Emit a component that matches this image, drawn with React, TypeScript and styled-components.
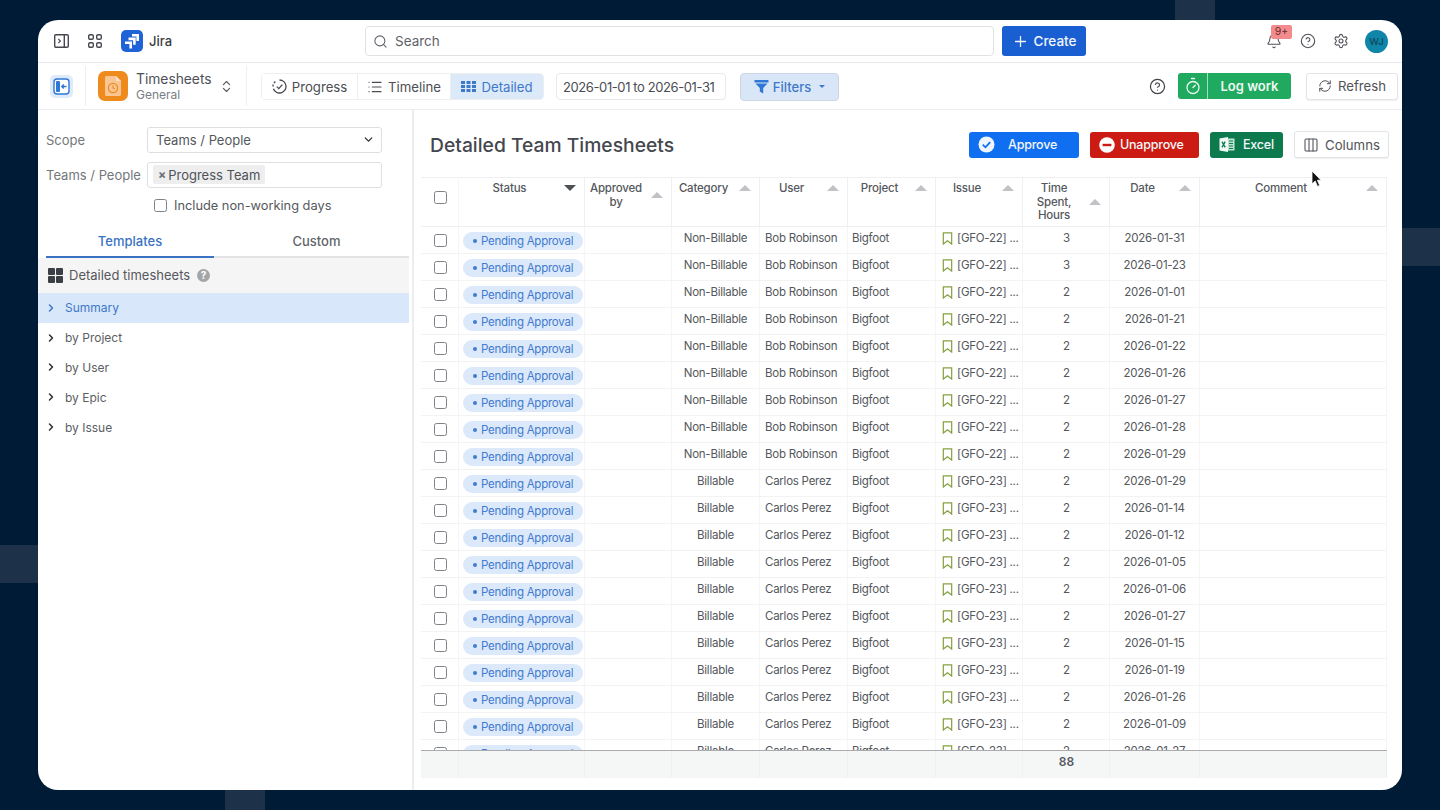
import { createGlobalStyle, styled } from "styled-components"
import {
  Bell,
  ChevronDown,
  ChevronRight,
  ChevronsUpDown,
  CircleHelp,
  Columns3,
  List,
  Plus,
  RefreshCw,
  Search,
  Settings,
  Timer,
} from "lucide-react"

const tile = (x: number, y: number, w: number, h: number, c = "#1d3249") =>
  `linear-gradient(${c}, ${c}) ${x}px ${y}px / ${w}px ${h}px no-repeat`

const GlobalStyle = createGlobalStyle`
  html, body {
    margin: 0;
    height: 100%;
    overflow: hidden;
  }
  body {
    font-family: Inter, "Liberation Sans", sans-serif;
    color: #44474d;
    background:
      ${tile(0, 545, 38, 38)},
      ${tile(1175, 0, 40, 20)},
      ${tile(225, 790, 40, 20)},
      ${tile(1402, 228, 38, 38)},
      #001b35;
  }
  * {
    box-sizing: border-box;
  }
`

const Page = styled.div`
  width: 1440px;
  height: 810px;
  padding: 20px 38px;
`

const Win = styled.div`
  width: 1364px;
  height: 770px;
  background: #fff;
  border-radius: 20px;
  overflow: hidden;
  display: flex;
  flex-direction: column;
`

const TopBar = styled.div`
  height: 43px;
  flex: none;
  display: flex;
  align-items: center;
  border-bottom: 1px solid #e6e7e9;
  padding: 0 14px 0 16px;
`

const TopIcon = styled.span<{ $w?: number }>`
  width: ${(p) => p.$w ?? 34}px;
  flex: none;
  display: flex;
  align-items: center;
`

const JiraName = styled.span`
  font-size: 13px;
  font-weight: 500;
  color: #3a3d42;
  margin-left: 6px;
  width: 216px;
`

const SearchBox = styled.div`
  width: 629px;
  height: 30px;
  flex: none;
  border: 1px solid #dfe1e4;
  border-radius: 4px;
  display: flex;
  align-items: center;
  gap: 7px;
  padding: 0 7px;
  font-size: 13.5px;
  color: #5e6168;
`

const CreateBtn = styled.div`
  width: 84px;
  height: 30px;
  flex: none;
  margin-left: 8px;
  background: #1a5fd2;
  border-radius: 3px;
  color: #f2f6fd;
  font-size: 13.5px;
  font-weight: 500;
  display: flex;
  align-items: center;
  justify-content: center;
  gap: 5px;
`

const TopRight = styled.div`
  margin-left: auto;
  display: flex;
  align-items: center;
  gap: 17px;
  color: #4c4f55;
`

const BellWrap = styled.span`
  position: relative;
  display: flex;
  margin-right: 1px;
`

const BellBadge = styled.span`
  position: absolute;
  left: 5px;
  top: -8px;
  width: 21px;
  height: 14px;
  background: #f28b8b;
  border-radius: 2px;
  color: #6d2d2d;
  font-size: 10.5px;
  line-height: 14px;
  text-align: center;
`

const Avatar = styled.span`
  width: 23px;
  height: 23px;
  margin-left: -1px;
  border-radius: 50%;
  background: #0f86a8;
  color: #0c4f69;
  font-size: 9.5px;
  font-weight: 600;
  display: flex;
  align-items: center;
  justify-content: center;
`

const ToolBar = styled.div`
  height: 47px;
  flex: none;
  display: flex;
  align-items: center;
  border-bottom: 1px solid #ececee;
  padding: 0 4px 0 12px;
`

const SideToggle = styled.span`
  width: 23px;
  height: 23px;
  flex: none;
  border-radius: 5px;
  background: #dfeafa;
  display: flex;
  align-items: center;
  justify-content: center;
`

const ToolDivider = styled.span<{ $gap: number }>`
  width: 1px;
  height: 40px;
  flex: none;
  background: #eeeff0;
  margin: 0 ${(p) => p.$gap}px 0 12px;
`

const AppTile = styled.span`
  width: 30px;
  height: 30px;
  flex: none;
  border-radius: 7px;
  background: #ef8a1d;
  display: flex;
  align-items: center;
  justify-content: center;
`

const AppName = styled.div`
  margin: 1px 0 0 8px;
  width: 83px;
  flex: none;
  font-size: 13.8px;
  line-height: 15px;
  color: #4d5157;
  small {
    display: block;
    font-size: 12px;
    color: #797c82;
  }
`

const Segments = styled.div`
  display: flex;
  height: 27px;
  margin-top: 1px;
  border: 1px solid #eceef0;
  border-radius: 4px;
  overflow: hidden;
  flex: none;
`

const Segment = styled.span<{ $active?: boolean; $w: number }>`
  width: ${(p) => p.$w}px;
  display: flex;
  align-items: center;
  justify-content: center;
  gap: 5px;
  font-size: 13.2px;
  color: ${(p) => (p.$active ? "#3d78c9" : "#4b4e54")};
  background: ${(p) => (p.$active ? "#dce9f9" : "#fff")};
  border-left: 1px solid #eceef0;
  &:first-child {
    border-left: 0;
  }
`

const DateRange = styled.span`
  width: 170px;
  height: 27px;
  flex: none;
  margin: 1px 0 0 12px;
  padding-left: 6px;
  border: 1px solid #e8e9eb;
  border-radius: 4px;
  font-size: 13px;
  letter-spacing: -0.4px;
  color: #4a4d53;
  display: flex;
  align-items: center;
  white-space: nowrap;
`

const FiltersBtn = styled.span`
  width: 99px;
  height: 28px;
  flex: none;
  margin: 1px 0 0 14px;
  background: #d9e6f7;
  border: 1px solid #ccd6e3;
  border-radius: 4px;
  color: #3d78c9;
  font-size: 13px;
  font-weight: 500;
  display: flex;
  align-items: center;
  justify-content: center;
  gap: 4px;
`

const Caret = styled.span`
  width: 0;
  height: 0;
  margin-left: 4px;
  border-left: 3px solid transparent;
  border-right: 3px solid transparent;
  border-top: 3px solid #3d78c9;
`

const ToolRight = styled.div`
  margin-left: auto;
  display: flex;
  align-items: center;
  color: #3f4247;
`

const LogWork = styled.div`
  margin-left: 12px;
  height: 26px;
  width: 113px;
  border-radius: 3px;
  background: #1faa5f;
  color: #f0faf4;
  font-size: 13px;
  font-weight: 600;
  display: flex;
  align-items: center;
`

const LogIcon = styled.span`
  width: 30px;
  height: 100%;
  flex: none;
  border-right: 1px solid #9fe0bd;
  display: flex;
  align-items: center;
  justify-content: center;
`

const LogText = styled.span`
  flex: 1;
  text-align: center;
`

const OutlineBtn = styled.div<{ $w: number }>`
  width: ${(p) => p.$w}px;
  height: 27px;
  flex: none;
  border: 1px solid #e3e4e6;
  border-radius: 3px;
  background: #fff;
  color: #4f5258;
  font-size: 13.2px;
  display: flex;
  align-items: center;
  justify-content: center;
  gap: 6px;
  box-shadow: 0 1px 1px #eef0f1;
`

const RefreshSlot = styled.div`
  margin-left: 15px;
`

const Body = styled.div`
  flex: 1;
  min-height: 0;
  display: flex;
`

const Sidebar = styled.aside`
  width: 376px;
  flex: none;
  border-right: 2px solid #eceded;
  padding-top: 17px;
`

const FormRow = styled.div`
  display: flex;
  align-items: center;
  height: 25px;
  margin-bottom: 10px;
  padding-left: 8px;
`

const FormLabel = styled.span`
  width: 101px;
  flex: none;
  font-size: 13px;
  color: #74777c;
  white-space: nowrap;
`

const Field = styled.div`
  width: 235px;
  height: 26px;
  border: 1px solid #dddfe2;
  border-radius: 3px;
  display: flex;
  align-items: center;
  justify-content: space-between;
  padding: 0 6px 0 8px;
  font-size: 13px;
  color: #55585d;
`

const TagField = styled(Field)`
  padding: 0 5px;
  justify-content: flex-start;
`

const Tag = styled.span`
  height: 19px;
  background: #eeeeef;
  border-radius: 2px;
  padding: 0 5px;
  font-size: 13px;
  color: #4f5257;
  display: flex;
  align-items: center;
  gap: 2px;
  b {
    font-weight: 700;
    font-size: 12px;
    color: #6a6d72;
  }
`

const CheckRow = styled.label`
  display: flex;
  align-items: center;
  gap: 7px;
  margin: -2px 0 0 116px;
  height: 20px;
  font-size: 12.8px;
  color: #55585d;
`

const Box = styled.span`
  display: block;
  width: 13px;
  height: 13px;
  flex: none;
  border: 1px solid #7f8388;
  border-radius: 2.5px;
  background: #fff;
`

const Tabs = styled.div`
  display: flex;
  margin: 6px 3px 0 8px;
  height: 37px;
  border-bottom: 2px solid #e2e3e5;
`

const TabItem = styled.span<{ $active?: boolean; $w: number }>`
  width: ${(p) => p.$w}px;
  height: 37px;
  flex: none;
  display: flex;
  align-items: center;
  justify-content: center;
  padding-top: 5px;
  font-size: 13px;
  font-weight: 500;
  color: ${(p) => (p.$active ? "#3a72c4" : "#62656a")};
  border-bottom: 2px solid ${(p) => (p.$active ? "#3a72c4" : "transparent")};
`

const TreeHead = styled.div`
  height: 35px;
  background: #f5f5f6;
  margin-right: 3px;
  padding: 0 0 1px 10px;
  display: flex;
  align-items: center;
  gap: 6px;
  font-size: 13px;
  color: #55585d;
`

const HintDot = styled.span`
  width: 13px;
  height: 13px;
  margin-left: 1px;
  border-radius: 50%;
  background: #a3a5a9;
  color: #fff;
  font-size: 10px;
  font-weight: 700;
  display: flex;
  align-items: center;
  justify-content: center;
`

const TreeRow = styled.div<{ $active?: boolean }>`
  height: 29.8px;
  margin-right: 3px;
  padding-left: 7px;
  display: flex;
  align-items: center;
  gap: 8px;
  font-size: 12px;
  color: ${(p) => (p.$active ? "#3d78c9" : "#5b5e63")};
  background: ${(p) => (p.$active ? "#d9e7fa" : "transparent")};
  svg {
    color: ${(p) => (p.$active ? "#3d78c9" : "#2d3036")};
  }
`

const Main = styled.main`
  flex: 1;
  min-width: 0;
  display: flex;
  flex-direction: column;
  padding: 0 15px 12px 7px;
`

const TitleRow = styled.div`
  height: 67px;
  flex: none;
  display: flex;
  align-items: center;
  padding: 2px 0 0 9px;
`

const PageTitle = styled.h1`
  margin: 0;
  font-size: 19.3px;
  font-weight: 500;
  color: #44474d;
`

const TitleActions = styled.div`
  margin-left: auto;
  margin-right: -2px;
  display: flex;
  align-items: center;
  gap: 11px;
`

const FillBtn = styled.div<{ $bg: string; $w: number; $gap: number }>`
  width: ${(p) => p.$w}px;
  height: 26px;
  flex: none;
  background: ${(p) => p.$bg};
  border-radius: 3px;
  padding-left: 9px;
  color: #f4f7fb;
  font-size: 12.5px;
  font-weight: 500;
  letter-spacing: -0.2px;
  display: flex;
  align-items: center;
  gap: ${(p) => p.$gap}px;
`

const Sheet = styled.div`
  flex: 1;
  min-height: 0;
  display: flex;
  flex-direction: column;
  border-top: 1px solid #eeeff0;
`

const GridRow = styled.div`
  display: grid;
  grid-template-columns: 38px 126px 87px 88px 88px 88px 87px 87px 90px 187px;
`

const HeadRow = styled(GridRow)`
  height: 49px;
  flex: none;
  border-bottom: 1px solid #eeeff0;
`

const HeadCell = styled.div`
  position: relative;
  padding: 4px 28px 0 4px;
  font-size: 11.5px;
  font-weight: 500;
  letter-spacing: -0.2px;
  line-height: 13.5px;
  text-align: center;
  color: #55585d;
  border-right: 1px solid #f0f0f2;
`

const SortMark = styled.span<{ $down?: boolean; $top: number }>`
  position: absolute;
  right: 8px;
  top: ${(p) => p.$top}px;
  width: 0;
  height: 0;
  border-left: 6px solid transparent;
  border-right: 6px solid transparent;
  ${(p) => (p.$down ? "border-top: 6px solid #4d5055;" : "border-bottom: 6px solid #c0c2c5;")}
`

const Rows = styled.div`
  flex: 1;
  min-height: 0;
  overflow: hidden;
`

const DataRow = styled(GridRow)`
  height: 27px;
  border-bottom: 1px solid #f3f3f4;
`

const Cell = styled.div<{ $center?: boolean }>`
  display: flex;
  align-items: center;
  justify-content: ${(p) => (p.$center ? "center" : "flex-start")};
  padding: 0 0 4px ${(p) => (p.$center ? 0 : 5)}px;
  font-size: 11.5px;
  letter-spacing: -0.25px;
  color: #54575c;
  white-space: nowrap;
  border-right: 1px solid #f5f5f6;
  overflow: hidden;
`

const ProjectCell = styled(Cell)`
  padding-left: 4px;
`

const HoursCell = styled(Cell)`
  padding-left: 1px;
`

const CheckCell = styled(Cell)`
  justify-content: center;
  padding: 0 0 0 1px;
`

const HeadCheck = styled(CheckCell)`
  padding-bottom: 10px;
`

const StatusCell = styled(Cell)`
  padding: 2px 0 0 4px;
`

const Pill = styled.span`
  width: 120px;
  height: 18px;
  flex: none;
  border-radius: 9px;
  background: #dce9fa;
  color: #3f7bd0;
  font-size: 11.5px;
  letter-spacing: -0.25px;
  display: flex;
  align-items: center;
  padding-left: 10px;
  gap: 4px;
  i {
    width: 4px;
    height: 4px;
    border-radius: 50%;
    background: #3f7bd0;
  }
`

const IssueCell = styled(Cell)`
  padding-left: 6px;
  gap: 4px;
`

const Foot = styled(GridRow)`
  height: 28px;
  flex: none;
  background: #f5f6f6;
  border-top: 1px solid #a9abae;
`

const FootCell = styled.div`
  display: flex;
  align-items: center;
  justify-content: center;
  padding: 0 0 6px 1px;
  font-size: 12px;
  font-weight: 600;
  color: #55585d;
  border-right: 1px solid #f0f0f1;
`

const Cursor = styled.svg`
  position: fixed;
  left: 1311px;
  top: 170px;
`

const JiraLogo = () => (
  <svg width="22" height="22" viewBox="0 0 22 22">
    <rect width="22" height="22" rx="5" fill="#1f63d6" />
    <path d="M11 4h7v7h-2.6V6.6H11z" fill="#fff" />
    <path d="M7.5 7.6h7.2v7.2h-2.6v-4.6H7.5z" fill="#fff" />
    <path d="M4 11.4h7v7H8.4v-4.5H4z" fill="#fff" />
  </svg>
)

const PanelIcon = () => (
  <svg width="15" height="14" viewBox="0 0 15 14" fill="none" stroke="#44474d" strokeWidth="1.4">
    <rect x="0.7" y="0.7" width="13.6" height="12.6" rx="1.2" />
    <path d="M10.3 0.7v12.6" />
    <path d="M4.4 5l2 2-2 2" strokeWidth="1.1" />
  </svg>
)

const AppsIcon = () => (
  <svg width="14" height="14" viewBox="0 0 14 14" fill="none" stroke="#44474d" strokeWidth="1.4">
    <rect x="0.7" y="0.7" width="4.6" height="4.6" rx="1.4" />
    <rect x="8.7" y="0.7" width="4.6" height="4.6" rx="1.4" />
    <rect x="0.7" y="8.7" width="4.6" height="4.6" rx="1.4" />
    <rect x="8.7" y="8.7" width="4.6" height="4.6" rx="1.4" />
  </svg>
)

const SideToggleIcon = () => (
  <svg width="17" height="17" viewBox="0 0 17 17">
    <rect x="1" y="1" width="15" height="15" rx="3" fill="#fff" stroke="#2f78d6" strokeWidth="1.4" />
    <rect x="3" y="3" width="4" height="11" rx="1" fill="#2f78d6" />
    <path d="M13.5 8.5H9M10.8 6.5l-2 2 2 2" fill="none" stroke="#2f78d6" strokeWidth="1.4" />
  </svg>
)

const AppIcon = () => (
  <svg width="18" height="22" viewBox="0 0 18 22">
    <path d="M1 2.5A1.5 1.5 0 0 1 2.5 1H12l5 5v13.5a1.5 1.5 0 0 1-1.5 1.5h-13A1.5 1.5 0 0 1 1 19.5z" fill="#f9c592" />
    <path d="M12 1v5h5z" fill="#fbe0c4" />
    <circle cx="9" cy="13" r="4.6" fill="none" stroke="#ef8a1d" strokeWidth="1.3" />
    <path d="M9 10.6V13l1.7 1" fill="none" stroke="#ef8a1d" strokeWidth="1.2" />
  </svg>
)

const ProgressIcon = () => (
  <svg width="15" height="15" viewBox="0 0 15 15" fill="none" stroke="#45484e" strokeWidth="1.3">
    <path d="M7.5 1a6.5 6.5 0 1 1-6.1 8.7" />
    <path d="M1 7.5a6.5 6.5 0 0 1 3.4-5.7" strokeDasharray="2 1.6" />
    <path d="M4.8 7.6l2 2 3.5-4" />
  </svg>
)

const DetailedIcon = () => (
  <svg width="15" height="11" viewBox="0 0 15 11" fill="#3d78c9">
    {[0, 4, 8].map((y) =>
      [0, 5.5, 11].map((x) => <rect key={`${x}-${y}`} x={x} y={y} width="4" height="3" />),
    )}
  </svg>
)

const FunnelIcon = () => (
  <svg width="15" height="15" viewBox="0 0 15 15" fill="#2f78d6">
    <rect x="0.5" y="1" width="14" height="2.6" rx="0.6" />
    <path d="M1.5 4.6h12L9.2 9v5.4L5.8 12.6V9z" />
  </svg>
)

const GridIcon = () => (
  <svg width="15" height="15" viewBox="0 0 15 15" fill="#3c3f45">
    <rect width="7" height="7" rx="1" />
    <rect x="8" width="7" height="7" rx="1" />
    <rect y="8" width="7" height="7" rx="1" />
    <rect x="8" y="8" width="7" height="7" rx="1" />
  </svg>
)

const ApproveIcon = () => (
  <svg width="17" height="17" viewBox="0 0 17 17">
    <circle cx="8.5" cy="8.5" r="8" fill="#eef5ff" />
    <path d="M4.8 8.7l2.6 2.6 4.8-5.2" fill="none" stroke="#0f6ff0" strokeWidth="1.8" />
  </svg>
)

const UnapproveIcon = () => (
  <svg width="16" height="16" viewBox="0 0 16 16">
    <circle cx="8" cy="8" r="7.8" fill="#fff" />
    <rect x="3.6" y="6.8" width="8.8" height="2.4" fill="#cc1b12" />
  </svg>
)

const ExcelIcon = () => (
  <svg width="16" height="15" viewBox="0 0 16 15">
    <path d="M8 1.5h7.5v12H8z" fill="#bfe3d1" />
    <path d="M10 4h4M10 6.5h4M10 9h4M10 11.5h4" stroke="#0d7a4e" strokeWidth="1" />
    <path d="M0.5 1.5 9 0v15L0.5 13.5z" fill="#f2faf6" />
    <path d="M3 4.6l3.2 5.8M6.2 4.6 3 10.4" stroke="#0d7a4e" strokeWidth="1.3" />
  </svg>
)

const BookmarkIcon = () => (
  <svg width="11" height="13" viewBox="0 0 11 14" fill="none" stroke="#86a040" strokeWidth="1.3">
    <path d="M1 1h9v12L5.5 9.5 1 13z" />
  </svg>
)

const columns = [
  { label: "Status", top: 7, down: true },
  { label: "Approved by", top: 14 },
  { label: "Category", top: 7 },
  { label: "User", top: 7 },
  { label: "Project", top: 7 },
  { label: "Issue", top: 7 },
  { label: "Time Spent, Hours", top: 21 },
  { label: "Date", top: 7 },
  { label: "Comment", top: 7 },
]

const bob = [
  ["3", "2026-01-31"],
  ["3", "2026-01-23"],
  ["2", "2026-01-01"],
  ["2", "2026-01-21"],
  ["2", "2026-01-22"],
  ["2", "2026-01-26"],
  ["2", "2026-01-27"],
  ["2", "2026-01-28"],
  ["2", "2026-01-29"],
]

const carlos = [
  "2026-01-29",
  "2026-01-14",
  "2026-01-12",
  "2026-01-05",
  "2026-01-06",
  "2026-01-27",
  "2026-01-15",
  "2026-01-19",
  "2026-01-26",
  "2026-01-09",
  "2026-01-27",
]

const rows = [
  ...bob.map(([hours, date]) => ({
    category: "Non-Billable",
    user: "Bob Robinson",
    issue: "[GFO-22] ...",
    hours,
    date,
  })),
  ...carlos.map((date) => ({
    category: "Billable",
    user: "Carlos Perez",
    issue: "[GFO-23] ...",
    hours: "2",
    date,
  })),
]

const footCells = ["", "", "", "", "", "", "", "88", "", ""]

export default function App() {
  return (
    <Page>
      <GlobalStyle />
      <Win>
        <TopBar>
          <TopIcon>
            <PanelIcon />
          </TopIcon>
          <TopIcon $w={33}>
            <AppsIcon />
          </TopIcon>
          <JiraLogo />
          <JiraName>Jira</JiraName>
          <SearchBox>
            <Search size={15} strokeWidth={1.7} />
            Search
          </SearchBox>
          <CreateBtn>
            <Plus size={17} strokeWidth={1.8} />
            Create
          </CreateBtn>
          <TopRight>
            <BellWrap>
              <Bell size={16} strokeWidth={1.6} />
              <BellBadge>9+</BellBadge>
            </BellWrap>
            <CircleHelp size={16} strokeWidth={1.6} />
            <Settings size={16} strokeWidth={1.6} />
            <Avatar>WJ</Avatar>
          </TopRight>
        </TopBar>

        <ToolBar>
          <SideToggle>
            <SideToggleIcon />
          </SideToggle>
          <ToolDivider $gap={12} />
          <AppTile>
            <AppIcon />
          </AppTile>
          <AppName>
            Timesheets
            <small>General</small>
          </AppName>
          <ChevronsUpDown size={15} color="#5a5d63" strokeWidth={1.8} />
          <ToolDivider $gap={14} />
          <Segments>
            <Segment $w={95}>
              <ProgressIcon />
              Progress
            </Segment>
            <Segment $w={93}>
              <List size={16} strokeWidth={1.8} />
              Timeline
            </Segment>
            <Segment $w={93} $active>
              <DetailedIcon />
              Detailed
            </Segment>
          </Segments>
          <DateRange>2026-01-01 to 2026-01-31</DateRange>
          <FiltersBtn>
            <FunnelIcon />
            Filters
            <Caret />
          </FiltersBtn>
          <ToolRight>
            <CircleHelp size={17} strokeWidth={1.7} />
            <LogWork>
              <LogIcon>
                <Timer size={18} strokeWidth={1.7} />
              </LogIcon>
              <LogText>Log work</LogText>
            </LogWork>
            <RefreshSlot>
              <OutlineBtn $w={92}>
                <RefreshCw size={14} strokeWidth={1.7} />
                Refresh
              </OutlineBtn>
            </RefreshSlot>
          </ToolRight>
        </ToolBar>

        <Body>
          <Sidebar>
            <FormRow>
              <FormLabel>Scope</FormLabel>
              <Field>
                Teams / People
                <ChevronDown size={13} strokeWidth={2.6} color="#33363b" />
              </Field>
            </FormRow>
            <FormRow>
              <FormLabel>Teams / People</FormLabel>
              <TagField>
                <Tag>
                  <b>×</b>Progress Team
                </Tag>
              </TagField>
            </FormRow>
            <CheckRow>
              <Box />
              Include non-working days
            </CheckRow>
            <Tabs>
              <TabItem $active $w={168}>
                Templates
              </TabItem>
              <TabItem $w={205}>Custom</TabItem>
            </Tabs>
            <TreeHead>
              <GridIcon />
              Detailed timesheets
              <HintDot>?</HintDot>
            </TreeHead>
            {["Summary", "by Project", "by User", "by Epic", "by Issue"].map((name, i) => (
              <TreeRow key={name} $active={i === 0}>
                <ChevronRight size={12} strokeWidth={3} />
                {name}
              </TreeRow>
            ))}
          </Sidebar>

          <Main>
            <TitleRow>
              <PageTitle>Detailed Team Timesheets</PageTitle>
              <TitleActions>
                <FillBtn $bg="#0f6ff0" $w={110} $gap={13}>
                  <ApproveIcon />
                  Approve
                </FillBtn>
                <FillBtn $bg="#cc1b12" $w={109} $gap={5}>
                  <UnapproveIcon />
                  Unapprove
                </FillBtn>
                <FillBtn $bg="#0d7a4e" $w={73} $gap={8}>
                  <ExcelIcon />
                  Excel
                </FillBtn>
                <OutlineBtn $w={95}>
                  <Columns3 size={16} strokeWidth={1.6} />
                  Columns
                </OutlineBtn>
              </TitleActions>
            </TitleRow>

            <Sheet>
              <HeadRow>
                <HeadCheck>
                  <Box />
                </HeadCheck>
                {columns.map((c) => (
                  <HeadCell key={c.label}>
                    {c.label}
                    <SortMark $down={c.down} $top={c.top} />
                  </HeadCell>
                ))}
              </HeadRow>
              <Rows>
                {rows.map((r, i) => (
                  <DataRow key={i}>
                    <CheckCell>
                      <Box />
                    </CheckCell>
                    <StatusCell>
                      <Pill>
                        <i />
                        Pending Approval
                      </Pill>
                    </StatusCell>
                    <Cell />
                    <Cell $center>{r.category}</Cell>
                    <Cell>{r.user}</Cell>
                    <ProjectCell>Bigfoot</ProjectCell>
                    <IssueCell>
                      <BookmarkIcon />
                      {r.issue}
                    </IssueCell>
                    <HoursCell $center>{r.hours}</HoursCell>
                    <Cell $center>{r.date}</Cell>
                    <Cell />
                  </DataRow>
                ))}
              </Rows>
              <Foot>
                {footCells.map((text, i) => (
                  <FootCell key={i}>{text}</FootCell>
                ))}
              </Foot>
            </Sheet>
          </Main>
        </Body>
      </Win>
      <Cursor width="12" height="18" viewBox="0 0 12 18">
        <path d="M1 1v13l3.2-3 2.3 5.4 2.2-1-2.3-5.2H10z" fill="#111" stroke="#fff" strokeWidth="0.8" />
      </Cursor>
    </Page>
  )
}
